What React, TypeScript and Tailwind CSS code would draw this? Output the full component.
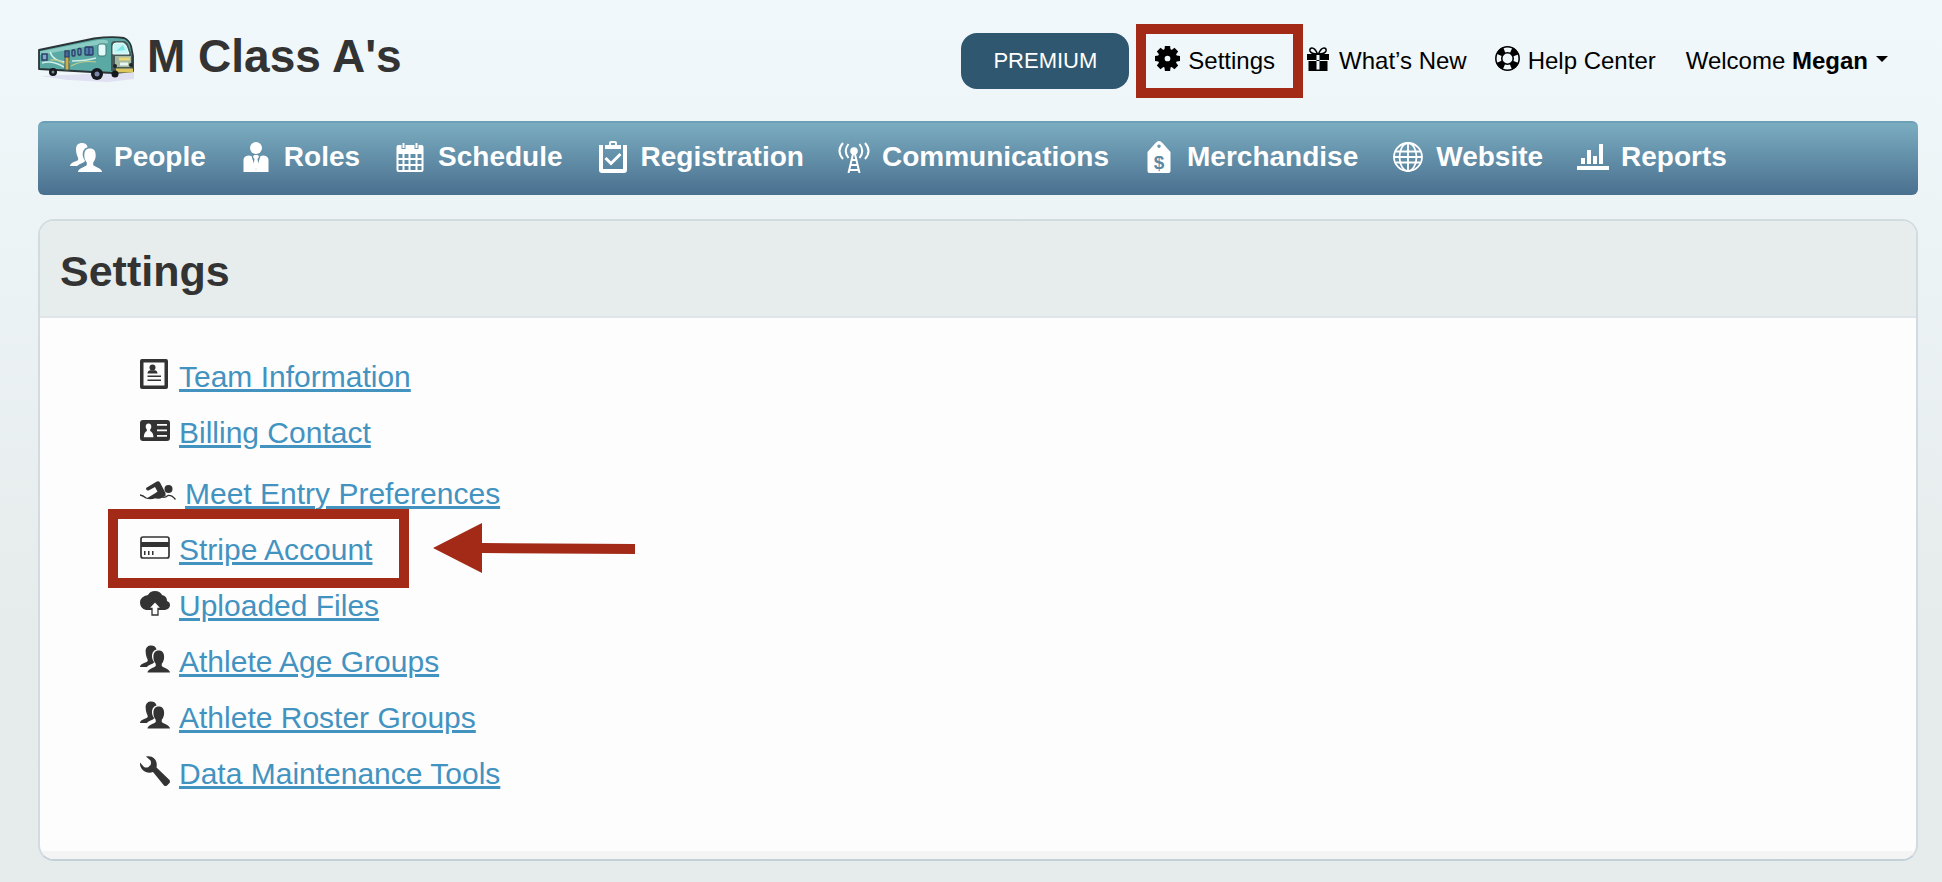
import React from 'react';

type IconProps = { className?: string };

const BusLogo: React.FC = () => (
  <svg viewBox="0 0 96 46" className="h-[46px] w-24 shrink-0" aria-label="Bus" role="img">
    <path d="M2 40 L30 44 L70 46 L96 43 L96 36 Z" fill="#dfe0f1" />
    <path d="M1 14 L56 2.500 Q74 0 86 2 Q91 4 93 10 L95 20 V35 L76 37 L54 36 L1 33 Z" fill="#5aa9a4" stroke="#2a3436" strokeWidth="1.800" strokeLinejoin="round" />
    <path d="M2 15.500 L60 4 Q68 3 70 5 L70 7 L40 12 L2 19 Z" fill="#8accc4" />
    <path d="M12 16 Q16 27 32 26 M34 25 Q48 25 58 22 M4 27 Q14 24 26 31" fill="none" stroke="#cfeee6" strokeWidth="1.500" />
    <path d="M12 24 Q20 23 27 28 M33 30 Q44 24 58 26" fill="none" stroke="#c3cc8d" strokeWidth="1.200" />
    <rect x="4" y="18" width="5" height="6" fill="#7fa8cf" stroke="#2d3f65" strokeWidth="1.500" />
    <rect x="27" y="15" width="4" height="19" fill="#c9b24d" stroke="#46585a" />
    <rect x="27" y="15" width="4" height="6" fill="#45679b" stroke="#2d3b65" />
    <rect x="34" y="14" width="3" height="6" rx="1" fill="#5f8fc0" stroke="#2d3b65" strokeWidth="1.300" />
    <rect x="40" y="12.500" width="3" height="6.500" rx="1" fill="#5f8fc0" stroke="#2d3b65" strokeWidth="1.300" />
    <rect x="47" y="11" width="8" height="8" rx="1" fill="#4f7bb0" stroke="#2d3b65" strokeWidth="1.300" />
    <path d="M51 11 V19" stroke="#2d3b65" strokeWidth="1.200" />
    <rect x="60" y="8" width="8" height="12" rx="2" fill="#e3fbfb" stroke="#3c7b79" />
    <path d="M73 35 V9 Q73 5 77 5 H86 Q90 6 91 11 L94 20 V35 Z" fill="#465a5a" />
    <path d="M75 18 V10 Q75 7 78 7 H85 Q88 8 89 12 L91 18 Z" fill="#c4f6f6" stroke="#e8ffff" />
    <path d="M78 15 L85 9 L87 14 Z" fill="#7fe4e6" />
    <rect x="77" y="20" width="16" height="11" fill="#a6b8a0" />
    <path d="M81 23 H92" stroke="#e8d777" strokeWidth="3" />
    <path d="M82 28 H90" stroke="#e7f6f4" strokeWidth="3" />
    <circle cx="77" cy="30" r="2" fill="#20272b" />
    <circle cx="93" cy="29" r="2" fill="#20272b" />
    <path d="M78 34.500 H95" stroke="#dcc65e" strokeWidth="4" />
    <circle cx="15" cy="36" r="4" fill="#15181d" />
    <circle cx="15" cy="36" r="1.500" fill="#7b8891" />
    <circle cx="59" cy="38" r="6" fill="#15181d" />
    <circle cx="59" cy="38" r="2.500" fill="#7d86a8" />
    <circle cx="77" cy="38" r="3.500" fill="#15181d" />
  </svg>
);

const PeopleIcon: React.FC<IconProps> = ({ className }) => (
  <svg viewBox="0 0 32 29" fill="currentColor" className={className} aria-hidden="true">
    <path d="M12 0c3 0 5 1.200 5.600 4.300-3.600 1-5.200 4-4.800 8 .2 2 1 3.600 2 4.900v1.300c-1.500 1.700-5.500 2-7.500 4.500H0c.3-2.700 3.500-3.800 7-5.200 1.300-.6 1.600-1.800.9-3.300C6.700 12 6 9 6 6c0-4 2.500-6 6-6z" />
    <path d="M20 5.500c4 0 5.700 2.700 5.700 6.800 0 3-.9 5.500-2.500 7.200V22c1.200 1.800 8.500 3 8.800 7H8c.3-4 7.600-5.200 8.800-7v-2.500c-1.600-1.700-2.500-4.200-2.500-7.200 0-4.100 1.700-6.800 5.700-6.800z" />
  </svg>
);

const RolesIcon: React.FC<IconProps> = ({ className }) => (
  <svg viewBox="0 0 25 30" fill="currentColor" className={className} aria-hidden="true">
    <ellipse cx="12.500" cy="6" rx="6" ry="6" />
    <path d="M0 30V18q0-4 5-4.500L8 14l4.500 14V30zM25 30V18q0-4-5-4.500L17 14l-4.500 14V30z" />
    <path d="M10.500 13h4l1 2-1.500 2 1 6-2.500 5L10 23 11 17l-1.500-2z" />
  </svg>
);

const ScheduleIcon: React.FC<IconProps> = ({ className }) => (
  <svg viewBox="0 0 27 29" fill="currentColor" className={className} aria-hidden="true">
    <path
      fillRule="evenodd"
      d="M2 2h3v4h4V2h9v4h4V2h3q2 0 2 2v23q0 2-2 2H2q-2 0-2-2V4q0-2 2-2zM2 11v4h4v-4zM8 11v4h4v-4zM14 11v4h5v-4zM21 11v4h4v-4zM2 17v4h4v-4zM8 17v4h4v-4zM14 17v4h5v-4zM21 17v4h4v-4zM2 23v4h4v-4zM8 23v4h4v-4zM14 23v4h5v-4zM21 23v4h4v-4z"
    />
    <path d="M6 0h2v5H6zM19 0h2v5h-2z" />
  </svg>
);

const RegistrationIcon: React.FC<IconProps> = ({ className }) => (
  <svg viewBox="0 0 28 32" fill="currentColor" className={className} aria-hidden="true">
    <path d="M0 4h4v24h20V4h4v25q0 3-3 3H3q-3 0-3-3z" />
    <path fillRule="evenodd" d="M6 4h4V2q0-2 2-2h4q2 0 2 2v2h4v4H6zM12 2v2h4V2z" />
    <path d="M6.500 17l5.500 5.500L21.500 13" fill="none" stroke="currentColor" strokeWidth="3" />
  </svg>
);

const AntennaIcon: React.FC<IconProps> = ({ className }) => (
  <svg viewBox="0 0 32 31" fill="none" stroke="currentColor" strokeWidth="2" className={className} aria-hidden="true">
    <circle cx="16" cy="9" r="3.800" fill="currentColor" stroke="none" />
    <path d="M15.500 10L10.500 31M16.500 10L21.500 31M14 18h4M13 23h6M11.500 28h9" />
    <path d="M10.500 2q-5.500 7 0 14M5 1q-7 8 0 16M21.500 2q5.500 7 0 14M27 1q7 8 0 16" />
  </svg>
);

const TagIcon: React.FC<IconProps> = ({ className }) => (
  <svg viewBox="0 0 23 32" fill="currentColor" className={className} aria-hidden="true">
    <path fillRule="evenodd" d="M0 11L8 2q3.500-4 7 0l8 9v19q0 2-2 2H2q-2 0-2-2zM11.500 3.500a1.700 1.700 0 1 0 .01 0z" />
    <text x="11.500" y="28" textAnchor="middle" fontSize="19" fontWeight="700" fontFamily="Liberation Sans, Arial, sans-serif" fill="#5c89a4">$</text>
  </svg>
);

const GlobeIcon: React.FC<IconProps> = ({ className }) => (
  <svg viewBox="0 0 30 30" fill="none" stroke="currentColor" strokeWidth="1.800" className={className} aria-hidden="true">
    <circle cx="15" cy="15" r="14" />
    <ellipse cx="15" cy="15" rx="8.500" ry="14" />
    <path d="M15 1v28M1 15h28M3 9.500h24M3 20.500h24" />
  </svg>
);

const ReportsIcon: React.FC<IconProps> = ({ className }) => (
  <svg viewBox="0 0 32 26" fill="currentColor" className={className} aria-hidden="true">
    <path d="M0 22h32v4H0zM4 14h4v6H4zM10 6h4v14h-4zM16 12h4v8h-4zM22 0h4v20h-4z" />
  </svg>
);

const GearIcon: React.FC<IconProps> = ({ className }) => (
  <svg viewBox="0 0 24 24" fill="currentColor" className={className} aria-hidden="true">
    <circle cx="12" cy="12" r="6" fill="none" stroke="currentColor" strokeWidth="6.500" />
    <path d="M9.500 0h5l.6 5H8.900zM9.500 24h5l.6-5H8.900zM0 9.500v5l5 .6V8.900zM24 9.500v5l-5 .6V8.900z" />
    <path d="M9.500 0h5l.6 5H8.900zM9.500 24h5l.6-5H8.900zM0 9.500v5l5 .6V8.900zM24 9.500v5l-5 .6V8.900z" transform="rotate(45 12 12)" />
  </svg>
);

const GiftIcon: React.FC<IconProps> = ({ className }) => (
  <svg viewBox="0 0 22 24" fill="currentColor" className={className} aria-hidden="true">
    <path fillRule="evenodd" d="M0 7h22v6H0zM1.500 14h19v10h-19zM9.500 8v14.500h3V8z" />
    <path d="M10.500 7Q8 1 5 1 2.500 1 3 4q1 3 7.500 3zM11.500 7Q14 1 17 1q2.500 0 2 3-1 3-7.500 3z" fill="none" stroke="currentColor" strokeWidth="1.600" />
  </svg>
);

const LifeRingIcon: React.FC<IconProps> = ({ className }) => (
  <svg viewBox="0 0 24 24" fill="none" stroke="currentColor" className={className} aria-hidden="true">
    <circle cx="12" cy="12" r="11.200" strokeWidth="1.500" />
    <circle cx="12" cy="12" r="5.500" strokeWidth="1.500" />
    <circle cx="12" cy="12" r="8.500" strokeWidth="6" strokeDasharray="6.676 6.676" strokeDashoffset="-3.338" />
  </svg>
);

const ProfileIcon: React.FC<IconProps> = ({ className }) => (
  <svg viewBox="0 0 28 30" fill="currentColor" className={className} aria-hidden="true">
    <path fillRule="evenodd" d="M2 0h24q2 0 2 2v26q0 2-2 2H2q-2 0-2-2V2q0-2 2-2zM3.500 3.500v23h21v-23z" />
    <circle cx="12.500" cy="8.500" r="3" />
    <path d="M7.500 14.500q0-3 3-3.300h4q3 .3 3 3.300zM7.500 16.500h13.500v1.500H7.500zM7.500 20.500h13.500v1.500H7.500z" />
  </svg>
);

const IdCardIcon: React.FC<IconProps> = ({ className }) => (
  <svg viewBox="0 0 30 21" fill="currentColor" className={className} aria-hidden="true">
    <path
      fillRule="evenodd"
      d="M3 0h24q3 0 3 3v15q0 3-3 3H3q-3 0-3-3V3q0-3 3-3zM17 4v1.800h10V4zM17 9.500v1.800h10V9.500zM17 15v1.800h10V15zM8.500 3.500C6.500 3.500 5.600 5 5.700 7q.2 1.700 1.300 2.700L6.700 11Q4 12.500 3.800 17.300H13.500Q13.200 12.500 10.300 11L10 9.700q1.200-1 1.300-2.700c.1-2-.8-3.500-2.800-3.500z"
    />
  </svg>
);

const SwimmerIcon: React.FC<IconProps> = ({ className }) => (
  <svg viewBox="0 0 36 20" fill="currentColor" className={className} aria-hidden="true">
    <circle cx="28.500" cy="8" r="4" />
    <path d="M6 7L16 1q2.500-1.500 4 .5L25.500 12v3l-5 2-14 .5 9-5.500 2-1.500-2.500-4.500L8.500 9.500Q6 10 6 7z" />
    <path d="M0 14q3 .5 6 3 5 1.500 9-.5 4 1.500 7-.5 3 1 6-1.500 4-.5 7.500 4" fill="none" stroke="currentColor" strokeWidth="1.300" />
  </svg>
);

const CardIcon: React.FC<IconProps> = ({ className }) => (
  <svg viewBox="0 0 30 23" fill="currentColor" className={className} aria-hidden="true">
    <rect x="1" y="1" width="28" height="21" rx="2" fill="none" stroke="currentColor" strokeWidth="1.700" />
    <path d="M1 6h28v5H1zM4 15h1.500v4H4zM8 15h1.500v4H8zM12 15h1.500v4H12z" />
  </svg>
);

const CloudUploadIcon: React.FC<IconProps> = ({ className }) => (
  <svg viewBox="0 0 30 25" fill="currentColor" className={className} aria-hidden="true">
    <path d="M8 4Q10 0 15 0t7 4q5 1 5 6 3 1 3 4 0 4-5 5H6q-6-1.500-6-7.500 0-6 8-7.500z" />
    <path d="M15 10.500l6.500 7h-3.500v6.500h-6v-6.500H8.500z" fill="#fdfdfd" stroke="currentColor" strokeWidth="1.300" />
  </svg>
);

const WrenchIcon: React.FC<IconProps> = ({ className }) => (
  <svg viewBox="0 0 30 30" fill="currentColor" className={className} aria-hidden="true">
    <path d="M6 .5C13-1 18 4 16.500 11.500L29.500 24q1 1.500 0 3L27 29.500q-1.500 1-3 0L13 16C6.500 18.500-.5 14 0 6.500L4 11q2.500 1.200 4.500 0l2-2Q11.500 7 10.500 4.500z" />
  </svg>
);

const navItems = [
  { label: 'People', icon: <PeopleIcon className="h-[29px] w-8" /> },
  { label: 'Roles', icon: <RolesIcon className="h-[30px] w-8" /> },
  { label: 'Schedule', icon: <ScheduleIcon className="h-[29px] w-8" /> },
  { label: 'Registration', icon: <RegistrationIcon className="h-8 w-8" /> },
  { label: 'Communications', icon: <AntennaIcon className="h-[31px] w-8" /> },
  { label: 'Merchandise', icon: <TagIcon className="h-8 w-8" /> },
  { label: 'Website', icon: <GlobeIcon className="h-[30px] w-8" /> },
  { label: 'Reports', icon: <ReportsIcon className="h-[26px] w-8" /> },
];

const settingsLinks = [
  { label: 'Team Information', icon: <ProfileIcon className="h-[30px] w-[28px]" /> },
  { label: 'Billing Contact', icon: <IdCardIcon className="h-[21px] w-[30px]" /> },
  { label: 'Meet Entry Preferences', icon: <SwimmerIcon className="h-5 w-9" />, tall: true },
  { label: 'Stripe Account', icon: <CardIcon className="h-[23px] w-[30px]" />, highlighted: true },
  { label: 'Uploaded Files', icon: <CloudUploadIcon className="h-[25px] w-[30px]" /> },
  { label: 'Athlete Age Groups', icon: <PeopleIcon className="h-[28px] w-[30px]" /> },
  { label: 'Athlete Roster Groups', icon: <PeopleIcon className="h-[28px] w-[30px]" /> },
  { label: 'Data Maintenance Tools', icon: <WrenchIcon className="h-[30px] w-[30px]" /> },
];

const Header: React.FC = () => (
  <header className="flex h-[121px] items-center justify-between pr-[30px]">
    <div className="flex items-center gap-[13px] pb-1">
      <BusLogo />
      <span className="pb-[6px] text-[46px] leading-[52px] font-bold text-[#333]">M Class A's</span>
    </div>
    <div className="flex items-center text-2xl text-black">
      <button type="button" className="h-14 w-[168px] rounded-2xl bg-[#2f5870] text-[22px] text-white">PREMIUM</button>
      <a href="#settings" className="relative ml-[26px] flex items-center gap-2">
        <GearIcon className="mb-1 h-[25px] w-[25px]" />
        Settings
        <span className="pointer-events-none absolute top-1/2 -left-[19px] h-[74px] w-[167px] -translate-y-1/2 border-10 border-[#a32a16]" />
      </a>
      <a href="#whats-new" className="ml-8 flex items-center gap-[10px]">
        <GiftIcon className="mb-1 h-6 w-[22px]" />
        What’s New
      </a>
      <a href="#help" className="ml-7 flex items-center gap-2">
        <LifeRingIcon className="mb-1 h-[25px] w-[25px]" />
        Help Center
      </a>
      <button type="button" className="ml-[30px] flex items-center gap-2">
        <span>Welcome <b>Megan</b></span>
        <svg viewBox="0 0 12 6" className="mb-1 h-[6px] w-3" aria-hidden="true">
          <path d="M0 0h12L6 6z" />
        </svg>
      </button>
    </div>
  </header>
);

const App: React.FC = () => {
  return (
    <div className="min-h-screen bg-linear-to-b from-[#f1f8fb] to-[#e6ecec] to-70% pr-6 pb-5 pl-[38px] font-['Liberation_Sans',Arial,sans-serif]">
      <Header />
      <nav className="flex h-[74px] items-center gap-[34px] rounded-md border-t-2 border-[#6c9fb6] bg-linear-to-b from-[#7badc1] to-[#4a708f] pb-1 pl-8 text-white">
        {navItems.map((item) => (
          <a key={item.label} href="#" className="flex items-center gap-3 text-[28px] leading-8 font-bold">
            {item.icon}
            {item.label}
          </a>
        ))}
      </nav>
      <main className="mt-6 overflow-hidden rounded-2xl border-2 border-[#d2dbdf] border-b-[#c3d0d7] bg-[#fdfdfd]">
        <div className="border-b-2 border-[#dfe5e9] bg-[#e7ecec] pt-[27px] pb-[21px] pl-5">
          <h1 className="text-[43px] leading-[47px] font-bold text-[#333]">Settings</h1>
        </div>
        <ul className="pt-[30px] pb-[50px] pl-[100px] text-[30px] text-[#333]">
          {settingsLinks.map((item) => (
            <li key={item.label} className={item.tall ? 'pt-[5px]' : ''}>
              <div className="relative flex h-14 items-center">
                <span className="mb-1 min-w-[30px]">{item.icon}</span>
                <a href="#" className="ml-[9px] text-[#4393c1] underline decoration-3 underline-offset-2">{item.label}</a>
                {item.highlighted && (
                  <>
                    <span className="pointer-events-none absolute -top-3 -left-8 h-[79px] w-[301px] border-10 border-[#a32a16]" />
                    <svg viewBox="0 0 202 50" fill="#a32a16" className="absolute top-[2px] left-[293px] h-[50px] w-[202px]" aria-hidden="true">
                      <path d="M0 25L49 0v20l153 1v10l-153-1v20z" />
                    </svg>
                  </>
                )}
              </div>
            </li>
          ))}
        </ul>
        <div className="h-2 bg-[#f4f4f4]" />
      </main>
    </div>
  );
};

export default App;
